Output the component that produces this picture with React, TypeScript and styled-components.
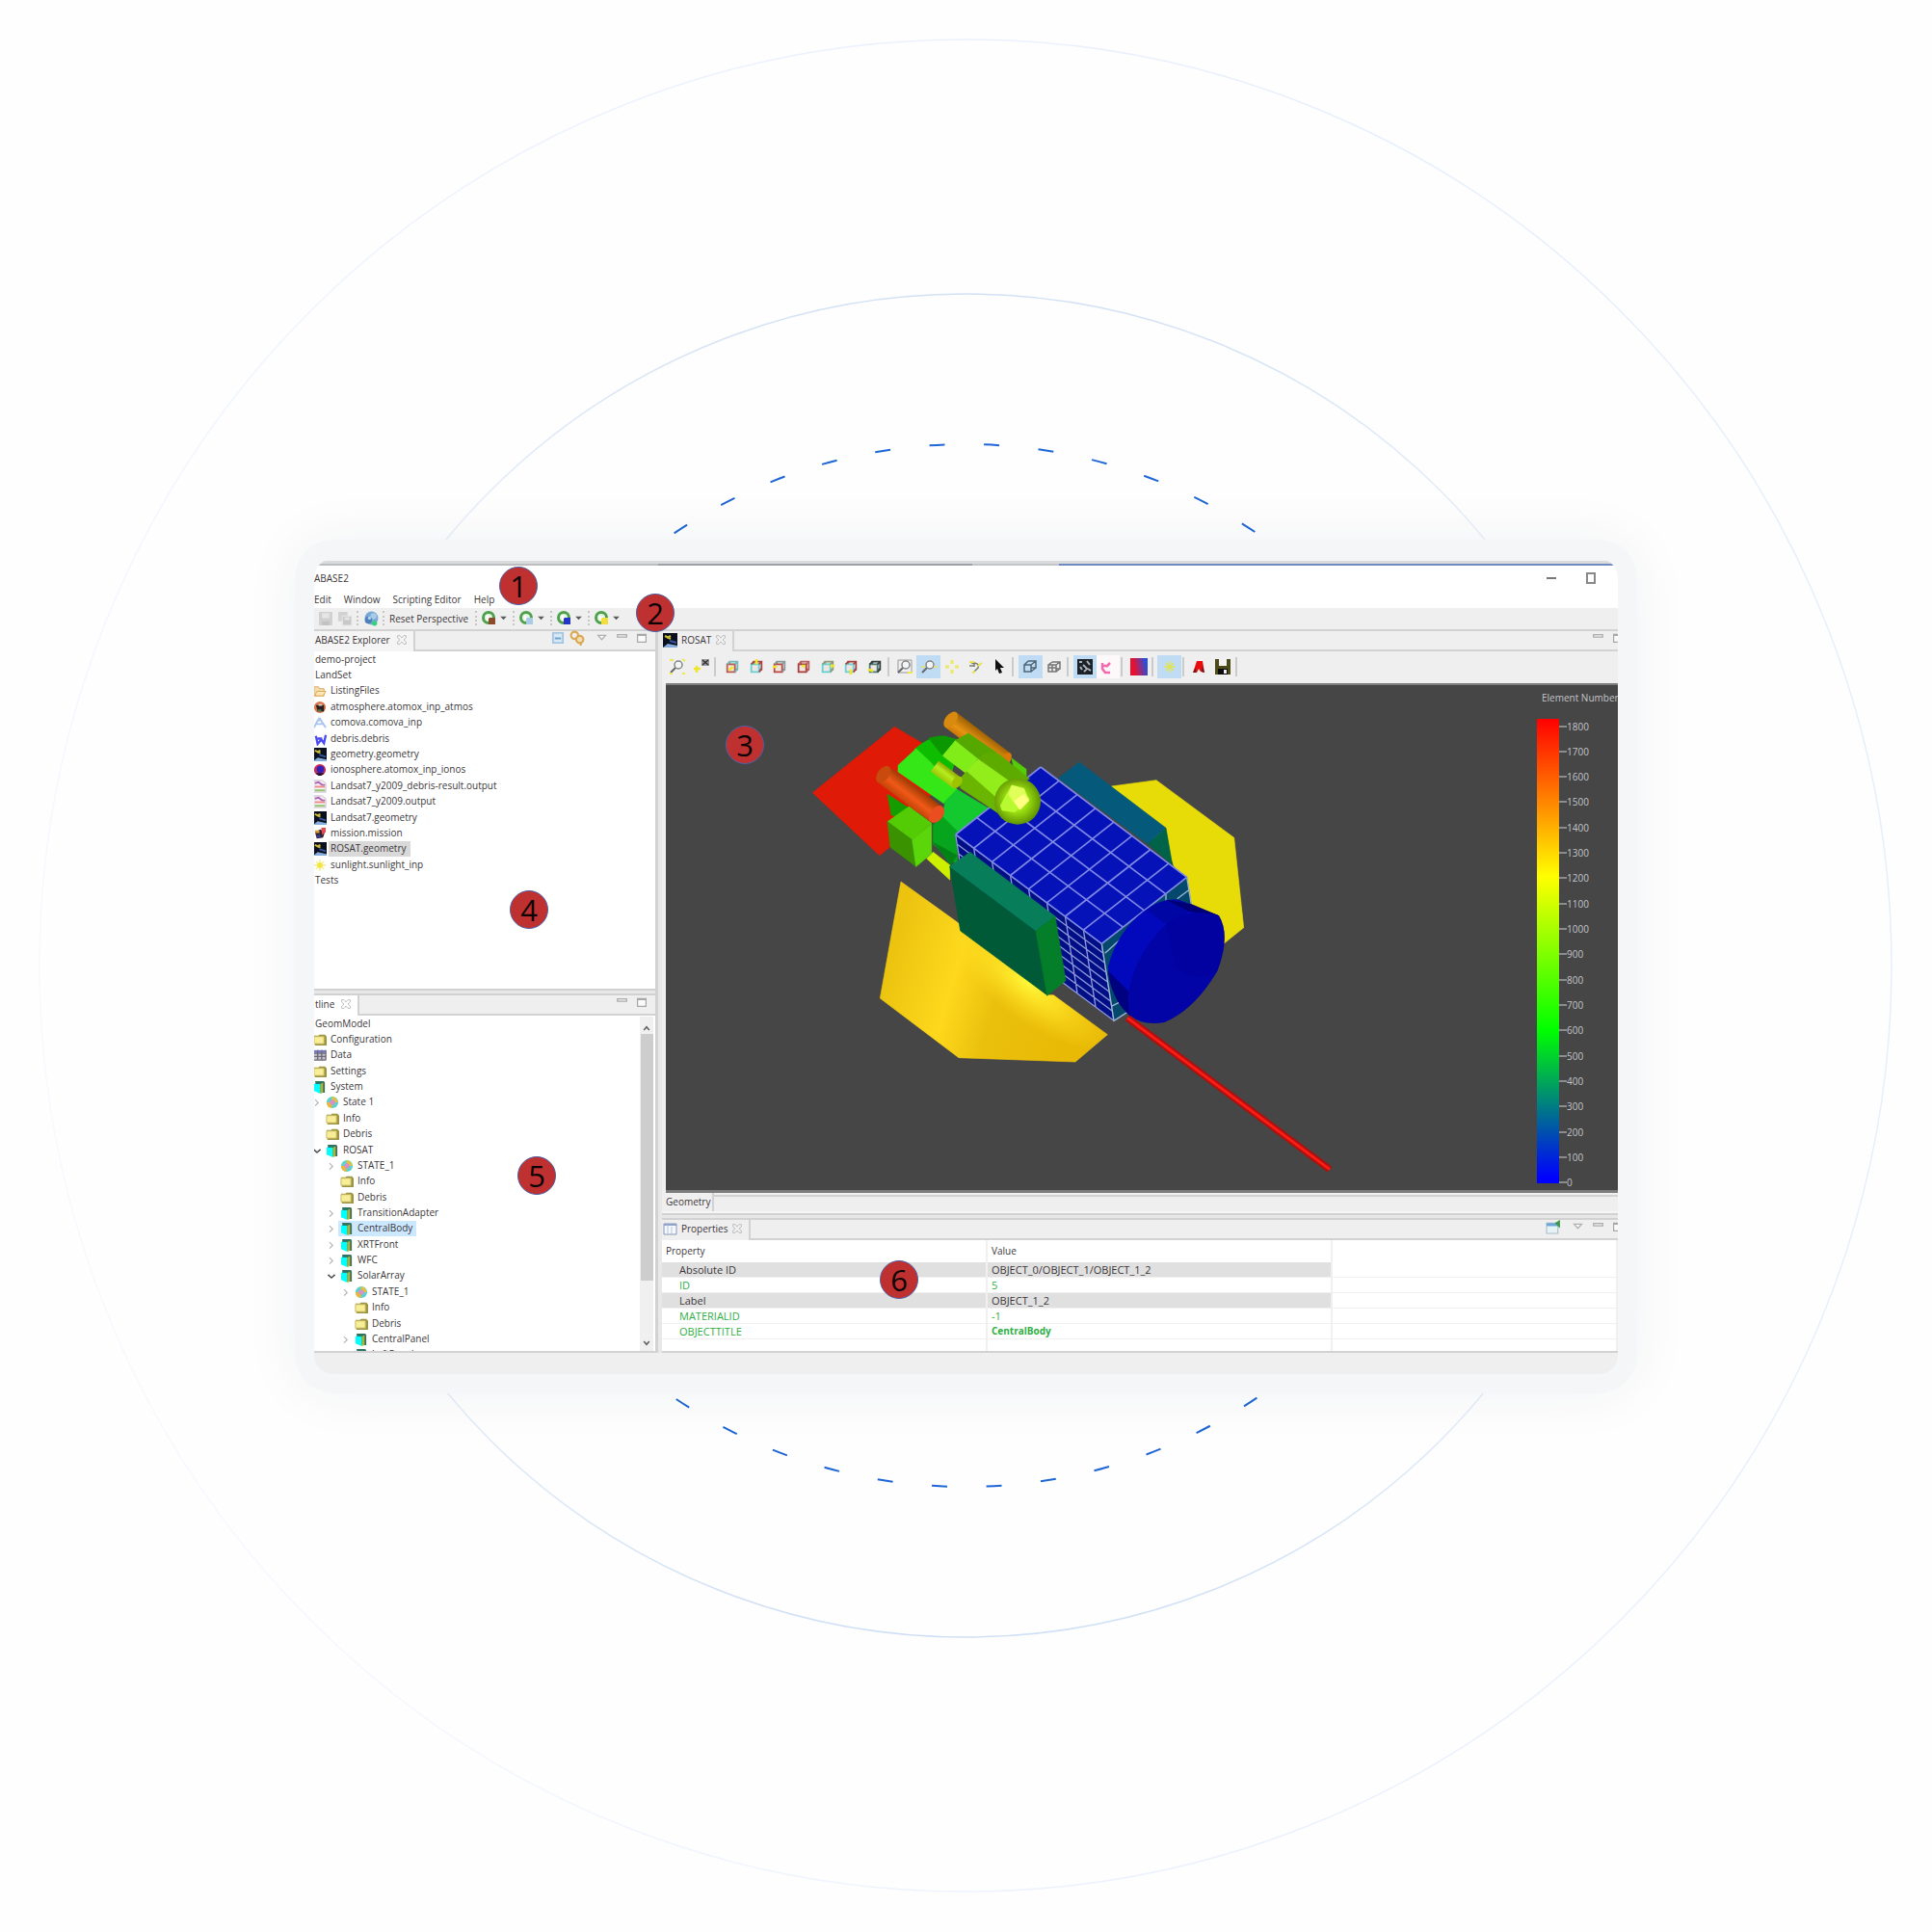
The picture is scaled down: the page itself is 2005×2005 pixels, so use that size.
import React from "react";
import styled, { createGlobalStyle, css } from "styled-components";

const Global = createGlobalStyle`
  *, *::before, *::after { box-sizing: border-box; }
  body { margin: 0; background: #fefefe; }
  button { font: inherit; color: inherit; background: none; border: 0; padding: 0; margin: 0; cursor: pointer; }
  ul { list-style: none; margin: 0; padding: 0; }
  svg { display: block; flex: none; }
`;

const LINE = "#d2d2d2";
const CHROME = "#efefef";

/* ---------- page ---------- */
const Stage = styled.main`
  position: relative;
  display: grid;
  place-items: center;
  min-height: 100vh;
  overflow: hidden;
  font: 10px/14px "Open Sans", "Noto Sans", sans-serif;
  color: #3c373a;
`;
const Rings = styled.svg`
  position: absolute;
  inset: 0;
  width: 100%;
  height: 100%;
`;
const Frame = styled.section`
  position: relative;
  width: 100%;
  max-width: 1393px;
  padding: 20px;
  border-radius: 40px;
  background: #f5f6f8;
  box-shadow: 0 0 60px rgba(30, 50, 80, 0.06);
`;
const AppWindow = styled.div`
  position: relative;
  border-radius: 20px;
  overflow: hidden;
  background: ${CHROME};
`;
const TopEdge = styled.div`
  display: flex;
  height: 7px;
  padding-top: 2px;
  background: #f5f6f8;
`;
const EdgePart = styled.span<{ $grow: number; $line: string }>`
  flex: ${(p) => p.$grow} 1 0;
  background: #dadbdd;
  border-bottom: 2px solid ${(p) => p.$line};
`;
const TitleBar = styled.header`
  display: flex;
  justify-content: space-between;
  align-items: center;
  height: 26px;
  padding-right: 22px;
  background: #fff;
`;
const WindowButtons = styled.div`
  display: flex;
  gap: 29px;
`;
const MenuBar = styled.nav`
  display: flex;
  gap: 13px;
  height: 18px;
  align-items: center;
  background: #fff;
`;
const MainToolbar = styled.div`
  display: flex;
  align-items: center;
  height: 22px;
  padding-left: 4px;
  gap: 4px;
`;
const Grip = styled.span`
  width: 3px;
  height: 15px;
  border-left: 2px dotted #c9c5c2;
`;
const ToolButton = styled.button`
  display: flex;
  align-items: center;
`;
const TextButton = styled(ToolButton)`
  padding-right: 3px;
`;
const RunButton = styled(ToolButton)`
  width: 28px;
  justify-content: space-between;
`;
const Workbench = styled.div`
  display: grid;
  grid-template-columns: 357px minmax(0, 1fr);
  column-gap: 4px;
  border-top: 2px solid ${LINE};
  background: #e8e8e8;
`;
const LeftColumn = styled.div`
  display: flex;
  flex-direction: column;
  gap: 3px;
  border-right: 3px solid ${LINE};
`;
const RightColumn = styled.div`
  display: flex;
  flex-direction: column;
  gap: 3px;
  min-width: 0;
`;
const Panel = styled.section<{ $grow?: boolean; $topLine?: boolean }>`
  display: flex;
  flex-direction: column;
  flex: ${(p) => (p.$grow ? "1 0 auto" : "0 0 auto")};
  border-top: ${(p) => (p.$topLine ? `2px solid ${LINE}` : 0)};
  border-bottom: 2px solid ${LINE};
  background: ${CHROME};
`;
const TabStrip = styled.div`
  display: flex;
  justify-content: space-between;
  height: 21px;
  border-bottom: 2px solid ${LINE};
`;
const Tab = styled.button<{ $bg?: string; $gap?: number }>`
  display: flex;
  align-items: center;
  gap: ${(p) => p.$gap ?? 6}px;
  height: 21px;
  padding: 0 6px 2px 1px;
  border-right: 2px solid ${LINE};
  background: ${(p) => p.$bg ?? CHROME};
`;
const StripTools = styled.div<{ $cut?: boolean }>`
  display: flex;
  align-items: center;
  gap: 8px;
  padding: 0 8px 4px 0;
  margin-right: ${(p) => (p.$cut ? -14 : 0)}px;
`;
const IconPair = styled.span`
  display: flex;
  align-items: center;
  gap: 5px;
  margin-right: 3px;
`;
const ExplorerBody = styled.div`
  height: 350px;
  padding-top: 1px;
  background: #fff;
`;
const OutlineBody = styled.div`
  display: flex;
  height: 348px;
  overflow: hidden;
  padding: 1px 2px 0 0;
  background: #fff;
`;
const Tree = styled.ul<{ $height: number }>`
  flex: 1;
  display: grid;
  grid-auto-rows: 1fr;
  height: ${(p) => p.$height}px;
`;
const Item = styled.li<{ $level: number }>`
  display: flex;
  align-items: center;
  margin-left: ${(p) => p.$level * 15 - 3}px;
  white-space: nowrap;
`;
const Twisty = styled.span`
  display: flex;
  justify-content: center;
  width: 12px;
  margin-left: -15px;
  margin-right: 1px;
`;
const Node = styled.button<{ $selected?: "tree" | "file" }>`
  display: flex;
  align-items: center;
  gap: 2px;
  height: 16px;
  padding: 0 4px 0 2px;
  background: ${(p) => (p.$selected === "tree" ? "#cce8ff" : "none")};
  ${(p) =>
    p.$selected === "file" &&
    css`
      & > span { background: #d9d9d9; margin-right: -4px; padding-right: 4px; }
    `}
`;
const Label = styled.span`
  height: 16px;
  line-height: 15px;
  padding-left: 2px;
`;
const ScrollBar = styled.div`
  display: flex;
  flex-direction: column;
  justify-content: space-between;
  align-items: center;
  width: 14px;
  height: 100%;
  padding: 6px 0 2px;
  background: #f0f0f0;
`;
const Thumb = styled.div`
  width: 13px;
  height: 256px;
  margin-bottom: 58px;
  background: #cdcdcd;
`;

/* ---------- editor ---------- */
const EditorTools = styled.div`
  display: flex;
  align-items: center;
  height: 33px;
  padding-left: 4px;
`;
const Group = styled.div<{ $width: number }>`
  display: flex;
  width: ${(p) => p.$width}px;
`;
const IconButton = styled.button<{ $on?: boolean; $white?: boolean }>`
  flex: 1;
  display: flex;
  align-items: center;
  justify-content: center;
  height: 24px;
  background: ${(p) => (p.$on ? "#bfdcf4" : p.$white ? "#fdf9fb" : "none")};
`;
const Separator = styled.span<{ $width?: number }>`
  width: ${(p) => p.$width ?? 8}px;
  height: 20px;
  border-left: 2px solid #cbcbcb;
  margin-left: 1px;
  margin-right: -1px;
`;
const Viewport = styled.div`
  display: grid;
  grid-template-columns: minmax(0, 1fr) 84px;
  flex: 1 0 auto;
  margin-left: 4px;
  background: #464646;
  border-top: 2px solid #7d7d7d;
  border-bottom: 3px solid #7d7d7d;
`;
const Model = styled.svg`
  width: 100%;
  height: 523px;
`;
const Legend = styled.div`
  display: flex;
  flex-direction: column;
  overflow: hidden;
  padding-top: 6px;
  color: #c3c4c8;
  white-space: nowrap;
`;
const LegendTitle = styled.span`
  padding-left: 5px;
`;
const Scale = styled.div`
  display: flex;
  flex: 1;
  padding-top: 15px;
`;
const Ramp = styled.div`
  width: 23px;
  margin-bottom: 7px;
  background: linear-gradient(#f00 0%, #ff0 34%, #0f0 67%, #00f 99%);
`;
const Ticks = styled.ul`
  display: flex;
  flex-direction: column;
  justify-content: space-between;
  margin-top: 1px;
`;
const Tick = styled.li`
  display: flex;
  align-items: center;
  height: 14px;
  &::before { content: ""; width: 8px; height: 2px; background: #8c8c8c; }
`;
const PageTabs = styled.div`
  display: flex;
  height: 21px;
  border-bottom: 2px solid #f5f5f5;
`;
const PageTab = styled.button`
  padding: 0 2px 0 4px;
  border-right: 2px solid ${LINE};
`;
const PageRest = styled.span`
  flex: 1;
  margin-top: 2px;
  border-top: 2px solid ${LINE};
`;

/* ---------- properties ---------- */
const TableWrap = styled.div`
  height: 115px;
  overflow: hidden;
  background: #fff;
`;
const Table = styled.table`
  width: 100%;
  border-collapse: collapse;
  table-layout: fixed;
  text-align: left;
`;
const Head = styled.th<{ $width?: number }>`
  width: ${(p) => (p.$width ? `${p.$width}px` : "auto")};
  height: 23px;
  padding: 0 4px;
  font-weight: 400;
  border-right: 2px solid #f0f0f0;
`;
const Row = styled.tr<{ $shade?: boolean; $green?: boolean }>`
  height: 16px;
  color: ${(p) => (p.$green ? "#2fae44" : "inherit")};
  & > td:not(:last-child) { background: ${(p) => (p.$shade ? "#e0e0e0" : "#fff")}; }
`;
const Cell = styled.td<{ $indent?: boolean; $bold?: boolean }>`
  padding: 0 4px 0 ${(p) => (p.$indent ? 18 : 4)}px;
  font-size: ${(p) => (p.$bold ? 10 : 11)}px;
  line-height: 15px;
  font-weight: ${(p) => (p.$bold ? 700 : 400)};
  border-right: 2px solid #f0f0f0;
  border-bottom: 1px solid #f0f0f0;
`;
const StatusBar = styled.footer`
  height: 22px;
`;
const Badge = styled.span<{ $x: number; $y: number }>`
  position: absolute;
  left: ${(p) => p.$x}px;
  top: ${(p) => p.$y}px;
  display: grid;
  place-items: center;
  width: 40px;
  height: 40px;
  border: 1px solid #4c62a4;
  border-radius: 50%;
  background: #bf3030;
  color: #0c0404;
  font-size: 31px;
  line-height: 38px;
`;

/* ---------- icons ---------- */
type IconName =
  | "folder" | "open" | "atmos" | "comova" | "debris" | "geom" | "iono" | "output" | "mission" | "sun"
  | "data" | "part" | "state" | "close" | "min" | "max" | "menu" | "down" | "collapse" | "link" | "table" | "pin"
  | "save" | "saveall" | "globe" | "right" | "open-v" | "up-v" | "down-v";

const art: Record<IconName, React.ReactNode> = {
  folder: <><path d="M1 3h5l1-1h6l2 2v10H2z" fill="#9b9443" /><path d="M1 4h11v8H1z" fill="#f8ee98" stroke="#c3b65c" /></>,
  open: <><path d="M1 3h5l1 2h5v8H1z" fill="#f4deb0" stroke="#d7a65a" /><path d="M4 8h10l-3 5H2z" fill="#fbe6b4" stroke="#d9a552" /></>,
  atmos: <><circle cx="7.500" cy="7.500" r="6.500" fill="#d9784c" /><path d="M3 5h9v7H5z" fill="#2b211f" /><path d="M6 4h4v2H6z" fill="#e6d6cc" /><path d="M5 10h4v2H5z" fill="#4b7a54" /></>,
  comova: <><path d="M7 2l-3 5-3 6M7 2l3 5 4 6M3 9h9M4 5h6" stroke="#a9c4f0" strokeWidth="2" fill="none" /></>,
  debris: <path d="M3 4l2 9 4-5 3 4 2-9M5 7h5" fill="none" stroke="#4a4af2" strokeWidth="2.500" />,
  geom: <><path d="M0 0h15v15H0z" fill="#0b1020" /><path d="M2 3l6 3M4 5l4-2" stroke="#c9bb35" strokeWidth="2" /><path d="M7 8l7 2" stroke="#35589c" strokeWidth="2" /><path d="M0 15l5-4 10 2v2z" fill="#86aedc" /></>,
  iono: <><circle cx="7.500" cy="7.500" r="6.500" fill="#c22c58" /><circle cx="8" cy="7" r="4" fill="#3322b8" /><path d="M3 11h9l-3 3H6z" fill="#1c1030" /></>,
  output: <><path d="M1 1h9l4 3v10H1z" fill="#f5f2f5" stroke="#c9b7cf" /><path d="M2 4l4-1 4 3h3" stroke="#b064b8" fill="none" strokeWidth="2" /><path d="M2 8h11" stroke="#f08a8a" strokeWidth="2" /><path d="M2 12h11" stroke="#8fc66c" strokeWidth="2" /></>,
  mission: <><path d="M2 6l6-3 5 3-2 6-7 1z" fill="#35202c" /><path d="M9 1h5v5l-4 3z" fill="#e24a55" /><path d="M2 4h5v3H2z" fill="#cf9b3d" /><path d="M4 9h4v3H4z" fill="#2c3c9a" /></>,
  sun: <><path d="M7.500 1v13M1 7.500h13M3 3l9 9M12 3l-9 9" stroke="#f7f0a8" strokeWidth="2" /><circle cx="7.500" cy="7.500" r="3" fill="#f5e53a" /></>,
  data: <><path d="M1 2h13v11H1z" fill="#c6c4cf" /><path d="M1 2h13v3H1z" fill="#7a78cf" /><path d="M1 5.500h13M1 9h13M1 13h13M5 2v11M9.500 2v11M14 2v11" stroke="#6d6b78" strokeWidth="1.500" /></>,
  part: <><path d="M2 1h10l1 2v11H8z" fill="#3f6e5c" /><path d="M1 4h7v11l-7-3z" fill="#0ff" /><path d="M8 3h3v11l-3 1z" fill="#a8b73c" /><path d="M3 2h8l-2 2H2z" fill="#247868" /></>,
  state: <><circle cx="7.500" cy="7.500" r="6.500" fill="#58d4cc" /><path d="M7 1a6.500 6.500 0 0 1 6.500 6.500H7z" fill="#e2c23e" /><path d="M7 14a6 6 0 0 1-6-6.500h6z" fill="#e8b93c" /><circle cx="7.500" cy="7.500" r="3" fill="#d893c4" /></>,
  close: <path d="M2 2h3l2.500 3L10 2h3v3l-3 2.500L13 10v3h-3L7.500 10 5 13H2v-3l3-2.500L2 5z" fill="none" stroke="#b4b4b4" />,
  min: <path d="M2 3h11v3H2z" fill="#f0f0f0" stroke="#adadad" strokeWidth="1.500" />,
  max: <><path d="M2 3h11v10H2z" fill="#fafafa" stroke="#a8a8a8" strokeWidth="1.500" /><path d="M2 4h11" stroke="#a8a8a8" strokeWidth="2" /></>,
  menu: <path d="M3 4h9L7.500 9z" fill="#fafafa" stroke="#b0b0b0" strokeWidth="1.500" />,
  down: <path d="M3 5h9l-4.500 5z" fill="#5a5a5a" />,
  collapse: <><path d="M2 2h11v11H2z" fill="#d8e9f6" stroke="#a5c6e2" strokeWidth="2" /><path d="M4 8h7" stroke="#6fa4d0" strokeWidth="2" /></>,
  link: <><circle cx="5" cy="5" r="3.500" fill="none" stroke="#dba852" strokeWidth="2" /><circle cx="10" cy="9" r="3.500" fill="#f2dfb6" stroke="#dba852" strokeWidth="2" /><path d="M11 12v3" stroke="#dba852" strokeWidth="2" /></>,
  table: <><path d="M1 2h13v11H1z" fill="#f5f8fc" stroke="#8797b9" /><path d="M1 3h13" stroke="#8fa3cb" strokeWidth="2" /><path d="M5 3v10M9 5v8" stroke="#b9c4da" /></>,
  pin: <><path d="M1 4h11v10H1z" fill="#e6f3f5" stroke="#a9bccb" /><path d="M1 4h11v3H1z" fill="#6fa8d8" /><path d="M9 4l5-3v8l-3-3z" fill="#3a9a4a" /></>,
  save: <><path d="M1 1h13v13H1z" fill="#d0d0d0" /><path d="M4 2h7v5H4z" fill="#e6e6e6" /><path d="M4 10h7v4H4z" fill="#c2c2c2" /></>,
  saveall: <><path d="M1 1h9v9H1z" fill="#d2d2d2" /><path d="M5 5h9v9H5z" fill="#c8c8c8" stroke="#e8e8e8" /><path d="M7 6h5v3H7z" fill="#e4e4e4" /></>,
  globe: <><circle cx="8" cy="7" r="6.500" fill="#78a8d6" /><circle cx="10" cy="5" r="3" fill="#a8cbe9" /><circle cx="5" cy="9" r="3.500" fill="#4c82bc" /><circle cx="6" cy="7" r="1.500" fill="#bcd8ee" /><circle cx="11" cy="12" r="2.500" fill="#35d07a" /></>,
  right: <path d="M5 4l4 4-4 4" fill="none" stroke="#b4b4b4" strokeWidth="1.500" />,
  "open-v": <path d="M3 6l4.500 4L12 6" fill="none" stroke="#505050" strokeWidth="2" />,
  "up-v": <path d="M4 10l3.500-4L11 10" fill="none" stroke="#606060" strokeWidth="2" />,
  "down-v": <path d="M4 5l3.500 4L11 5" fill="none" stroke="#606060" strokeWidth="2" />,
};
const Icon = ({ name, size = 14 }: { name: IconName; size?: number }) => (
  <svg width={size} height={size} viewBox="0 0 15 15" aria-hidden="true">{art[name]}</svg>
);
const RunIcon = ({ color }: { color: string }) => (
  <svg width="15" height="15" viewBox="0 0 15 15" aria-hidden="true">
    <circle cx="7" cy="7" r="5.500" fill="#e8f4e4" stroke="#4fa14d" strokeWidth="3" />
    <path d="M7 7h7v7H7z" fill={color} />
    <path d="M5 4l3 3-3 3z" fill="#fff" />
  </svg>
);

type Faces = { front: string; side: string; mark: string };
const CubeIcon = ({ front, side, mark }: Faces) => (
  <svg width="16" height="18" viewBox="0 0 18 18" aria-hidden="true">
    <path d="M6 3h9v9h-9z" fill="#e4eeee" stroke={side} strokeWidth="2" />
    <path d="M3 6h9v9H3z" fill="#efe6e4" stroke={front} strokeWidth="2" />
    <path d="M3 6l3-3M12 6l3-3M12 15l3-3" stroke={side} strokeWidth="2" />
    <path d={mark} stroke="#f0e72c" strokeWidth="3" />
  </svg>
);
const cubes: Faces[] = [
  { front: "#b8584e", side: "#73b9b8", mark: "M5 13l5-4" },
  { front: "#66cfd0", side: "#a94340", mark: "M9 0v6" },
  { front: "#b84a40", side: "#8a9a9c", mark: "M1 9h5" },
  { front: "#a83c38", side: "#b9625c", mark: "M7 8h4" },
  { front: "#60d2d2", side: "#929a78", mark: "M12 8h5" },
  { front: "#70cfd2", side: "#a8403c", mark: "M9 12v6" },
  { front: "#4b7a72", side: "#343c3c", mark: "M1 12l6 2" },
];
const ToolSvg = ({ children }: { children: React.ReactNode }) => (
  <svg width="18" height="18" viewBox="0 0 18 18" aria-hidden="true">{children}</svg>
);
const lens = (
  <><circle cx="10" cy="7" r="4" fill="#f4f6f6" stroke="#80858a" strokeWidth="1.500" /><path d="M7 10l-5 5" stroke="#666" strokeWidth="2" /></>
);

/* ---------- satellite ---------- */
const lerp = (a: number[], b: number[], t: number) => [a[0] + (b[0] - a[0]) * t, a[1] + (b[1] - a[1]) * t];
const mesh = (a: number[], b: number[], c: number[], d: number[], n: number, m: number) => {
  const parts: string[] = [];
  for (let i = 0; i <= n; i++) parts.push(`M${lerp(a, b, i / n)}L${lerp(d, c, i / n)}`);
  for (let j = 0; j <= m; j++) parts.push(`M${lerp(a, d, j / m)}L${lerp(b, c, j / m)}`);
  return parts.join("");
};
const Face = ({ p, c }: { p: string; c: string }) => <polygon points={p} fill={c} stroke={c} strokeWidth="2" />;

const Satellite = () => (
  <Model viewBox="-387 0 2712 1569" role="img" aria-label="ROSAT geometry">
    <defs>
      <radialGradient id="glow" gradientUnits="userSpaceOnUse" cx="0" cy="0" r="1" gradientTransform="translate(740 930) rotate(37) scale(300 110)">
        <stop offset="0" stopColor="#fff638" /><stop offset=".35" stopColor="#ffe628" stopOpacity=".8" /><stop offset="1" stopColor="#ffd91c" stopOpacity="0" />
      </radialGradient>
      <linearGradient id="dish" gradientUnits="userSpaceOnUse" x1="300" y1="900" x2="860" y2="1060">
        <stop offset="0" stopColor="#ecc410" /><stop offset=".35" stopColor="#fdd81c" /><stop offset=".6" stopColor="#eac00c" /><stop offset="1" stopColor="#e8ba06" />
      </linearGradient>
      <linearGradient id="tubeA" gradientUnits="userSpaceOnUse" x1="595" y1="145" x2="562" y2="190">
        <stop offset="0" stopColor="#a36404" /><stop offset=".6" stopColor="#e89412" /><stop offset="1" stopColor="#c87808" />
      </linearGradient>
      <linearGradient id="tubeB" gradientUnits="userSpaceOnUse" x1="388" y1="315" x2="352" y2="362">
        <stop offset="0" stopColor="#a33c04" /><stop offset=".55" stopColor="#f05a18" /><stop offset="1" stopColor="#c44408" />
      </linearGradient>
      <linearGradient id="tubeC" gradientUnits="userSpaceOnUse" x1="498" y1="258" x2="472" y2="292">
        <stop offset="0" stopColor="#8c9a00" /><stop offset=".5" stopColor="#b4ee1c" /><stop offset="1" stopColor="#a0c80a" />
      </linearGradient>
      <radialGradient id="dome" gradientUnits="userSpaceOnUse" cx="705" cy="360" r="78">
        <stop offset="0" stopColor="#d4ff40" /><stop offset=".45" stopColor="#9be012" /><stop offset="1" stopColor="#5a8c00" />
      </radialGradient>
    </defs>
    <Face p="325,130 410,180 470,300 310,505 278,530 70,335" c="#df1a06" />
    <Face p="1000,315 1140,296 1382,475 1412,755 1350,805 1240,690 1190,550" c="#e8dc08" />
    <Face p="345,612 520,738 800,965 820,965 988,1088 888,1173 525,1160 280,975" c="url(#dish)" />
    <polygon points="345,612 520,738 800,965 820,965 988,1088 888,1173 525,1160 280,975" fill="url(#glow)" />
    <Face p="835,290 900,240 1170,445 1115,495" c="#055a7c" />
    <Face p="1115,495 1170,445 1190,560" c="#006248" />
    <Face p="303,340 350,370 440,430 315,405" c="#159d00" />
    <path d="M385 200Q430 160 480 158L530 172L500 290Z" fill="#0fbd00" />
    <path d="M430 165Q460 155 480 158L525 172L478 225Z" fill="#0b9700" />
    <Face p="336,250 392,198 435,238 520,325 478,368 336,270" c="#35e717" />
    <Face p="425,540 445,520 497,560 497,606" c="#cdf000" />
    <Face p="520,325 620,385 515,465 475,415 482,362" c="#13c92f" />
    <Face p="475,410 520,455 520,560 445,495 445,435" c="#06a51d" />
    <Face p="445,490 520,530 500,560" c="#038316" />
    <Face p="303,425 370,378 440,430 380,482" c="#54cc05" />
    <Face p="303,425 380,482 392,565 312,505" c="#3a9200" />
    <Face p="380,482 440,432 440,525 392,565" c="#5ad60a" />
    <Face p="515,465 970,805 1008,1045 553,705" c="#000f86" />
    <path d={mesh([515, 465], [970, 805], [1008, 1045], [553, 705], 8, 8)} stroke="#8f97d8" strokeWidth="4" fill="none" />
    <Face p="970,805 1235,598 1250,690 1050,1018 1008,1045" c="#04496c" />
    <path d="M970 805L1235 598L1250 690M970 805L1008 1045L1050 1018M1170 650V680M1205 665L1245 635M980 835L1030 790M1000 1000L1030 985" stroke="#9fb4d8" strokeWidth="4" fill="none" />
    <Face p="515,465 780,255 1235,598 970,805" c="#0512b8" />
    <path d={mesh([515, 465], [970, 805], [1235, 598], [780, 255], 8, 4)} stroke="#7f88e4" strokeWidth="5" fill="none" />
    <path d="M990 875Q1020 765 1100 705Q1150 665 1200 668L1335 718L1060 1032Q990 960 990 875Z" fill="#0208bb" />
    <path d="M1110 700Q1160 664 1210 668L1335 718L1245 705L1172 745Z" fill="#0006a4" />
    <path d="M1170 668L1250 682L1335 718L1245 706Z" fill="#000074" />
    <path d="M990 890L1055 955L1060 1032Q1000 980 990 890Z" fill="#00017e" />
    <path d="M1055 950Q1080 830 1172 745Q1240 690 1335 718Q1372 780 1330 890Q1260 1010 1165 1050Q1100 1062 1060 1030Q1045 990 1055 950Z" fill="#0204a6" />
    <path d="M1172 745Q1240 690 1335 718Q1372 780 1330 890Q1260 930 1200 880Z" fill="#01029c" opacity=".6" />
    <Face p="497,565 765,765 800,965 530,765" c="#005a37" />
    <Face p="497,565 560,520 825,720 765,765" c="#087d5a" />
    <Face p="765,765 825,720 858,920 800,967" c="#047e28" />
    <path d="M500 108L672 238" stroke="url(#tubeA)" strokeWidth="58" />
    <ellipse cx="500" cy="108" rx="17" ry="29" fill="#d88a0e" transform="rotate(37 500 108)" />
    <ellipse cx="672" cy="230" rx="15" ry="22" fill="#d87a08" transform="rotate(37 672 230)" />
    <Face p="690,228 735,262 735,290 700,275" c="#55cc08" />
    <Face p="475,220 515,172 585,228 548,275" c="#80ed18" />
    <Face p="515,172 555,150 645,212 585,228" c="#55a800" />
    <Face p="585,228 612,210 650,215 745,292 690,315" c="#5eab00" />
    <Face p="530,290 550,268 670,360 665,410 530,320" c="#69b500" />
    <Face p="550,268 585,230 700,312 660,365" c="#93ed1a" />
    <path d="M450 252L522 306" stroke="url(#tubeC)" strokeWidth="42" />
    <ellipse cx="520" cy="302" rx="14" ry="20" fill="#9cc400" transform="rotate(37 520 302)" />
    <circle cx="708" cy="362" r="72" fill="url(#dome)" />
    <Face p="655,375 690,312 715,320 745,355 700,395 660,390" c="#b8fa30" />
    <Face p="690,312 728,322 742,358 715,388 695,362 680,340" c="#e0ff58" />
    <Face p="697,362 728,340 743,360 716,387" c="#ffff84" />
    <path d="M290 278L455 402" stroke="url(#tubeB)" strokeWidth="60" />
    <ellipse cx="290" cy="278" rx="18" ry="30" fill="#c84a0c" transform="rotate(37 290 278)" />
    <ellipse cx="456" cy="402" rx="20" ry="30" fill="#ea4e20" transform="rotate(37 456 402)" />
    <path d="M1050 1036L1680 1508" stroke="#b00f0c" strokeWidth="22" />
    <path d="M1050 1036L1680 1508" stroke="#fa1c16" strokeWidth="9" />
  </Model>
);

/* ---------- data ---------- */
type Entry = { text: string; icon?: IconName; level: number; twisty?: IconName; selected?: "tree" | "file" };
const files: Entry[] = [
  { text: "demo-project", level: 0 },
  { text: "LandSet", level: 0 },
  { text: "ListingFiles", level: 0, icon: "open" },
  { text: "atmosphere.atomox_inp_atmos", level: 0, icon: "atmos" },
  { text: "comova.comova_inp", level: 0, icon: "comova" },
  { text: "debris.debris", level: 0, icon: "debris" },
  { text: "geometry.geometry", level: 0, icon: "geom" },
  { text: "ionosphere.atomox_inp_ionos", level: 0, icon: "iono" },
  { text: "Landsat7_y2009_debris-result.output", level: 0, icon: "output" },
  { text: "Landsat7_y2009.output", level: 0, icon: "output" },
  { text: "Landsat7.geometry", level: 0, icon: "geom" },
  { text: "mission.mission", level: 0, icon: "mission" },
  { text: "ROSAT.geometry", level: 0, icon: "geom", selected: "file" },
  { text: "sunlight.sunlight_inp", level: 0, icon: "sun" },
  { text: "Tests", level: 0 },
];
const outline: Entry[] = [
  { text: "GeomModel", level: 0 },
  { text: "Configuration", level: 0, icon: "folder" },
  { text: "Data", level: 0, icon: "data" },
  { text: "Settings", level: 0, icon: "folder" },
  { text: "System", level: 0, icon: "part" },
  { text: "State 1", level: 1, icon: "state", twisty: "right" },
  { text: "Info", level: 1, icon: "folder" },
  { text: "Debris", level: 1, icon: "folder" },
  { text: "ROSAT", level: 1, icon: "part", twisty: "open-v" },
  { text: "STATE_1", level: 2, icon: "state", twisty: "right" },
  { text: "Info", level: 2, icon: "folder" },
  { text: "Debris", level: 2, icon: "folder" },
  { text: "TransitionAdapter", level: 2, icon: "part", twisty: "right" },
  { text: "CentralBody", level: 2, icon: "part", twisty: "right", selected: "tree" },
  { text: "XRTFront", level: 2, icon: "part", twisty: "right" },
  { text: "WFC", level: 2, icon: "part", twisty: "right" },
  { text: "SolarArray", level: 2, icon: "part", twisty: "open-v" },
  { text: "STATE_1", level: 3, icon: "state", twisty: "right" },
  { text: "Info", level: 3, icon: "folder" },
  { text: "Debris", level: 3, icon: "folder" },
  { text: "CentralPanel", level: 3, icon: "part", twisty: "right" },
  { text: "LeftPanel", level: 3, icon: "part" },
];
const properties = [
  { name: "Absolute ID", value: "OBJECT_0/OBJECT_1/OBJECT_1_2", shade: true },
  { name: "ID", value: "5" },
  { name: "Label", value: "OBJECT_1_2", shade: true },
  { name: "MATERIALID", value: "-1" },
  { name: "OBJECTTITLE", value: "CentralBody", bold: true },
];
const badges = [
  [192, 8], [334, 36], [427, 173], [203, 344], [211, 620], [587, 728],
];

const TreeView = ({ entries, height }: { entries: Entry[]; height: number }) => (
  <Tree $height={height}>
    {entries.map((e, i) => (
      <Item key={i} $level={e.level}>
        {e.level > 0 && <Twisty>{e.twisty && <Icon name={e.twisty} size={12} />}</Twisty>}
        <Node $selected={e.selected}>
          {e.icon && <Icon name={e.icon} />}
          <Label>{e.text}</Label>
        </Node>
      </Item>
    ))}
  </Tree>
);

export default function App() {
  return (
    <Stage>
      <Global />
      <Rings viewBox="0 0 2005 2005" aria-hidden="true">
        <defs>
          <linearGradient id="outer" x1="0" y1=".6" x2="1" y2=".3">
            <stop offset="0" stopColor="#f6f9fe" /><stop offset=".3" stopColor="#eef3fd" /><stop offset="1" stopColor="#e6eefc" />
          </linearGradient>
          <linearGradient id="middle" x1="0" y1="0" x2="0" y2="1">
            <stop offset="0" stopColor="#d3e1f5" /><stop offset=".2" stopColor="#ecf1fa" /><stop offset=".35" stopColor="#f4f7fc" stopOpacity="0" />
            <stop offset=".65" stopColor="#f4f7fc" stopOpacity="0" /><stop offset=".8" stopColor="#e6eefa" /><stop offset="1" stopColor="#cfdff5" />
          </linearGradient>
        </defs>
        <circle cx="1002" cy="1002" r="961" fill="none" stroke="url(#outer)" strokeWidth="1.500" />
        <circle cx="1002" cy="1002" r="697" fill="none" stroke="url(#middle)" strokeWidth="1.500" />
        <circle cx="1002" cy="1002" r="541" fill="none" stroke="#1f66d6" strokeWidth="2" strokeDasharray="16 40.650" strokeDashoffset="-19" />
      </Rings>
      <Frame>
        <AppWindow>
          <TopEdge>
            <EdgePart $grow={357} $line="#bcbdbf" />
            <EdgePart $grow={325} $line="#9da0a6" />
            <EdgePart $grow={90} $line="#c4c5c8" />
            <EdgePart $grow={580} $line="#6f8abf" />
          </TopEdge>
          <TitleBar>
            <span>ABASE2</span>
            <WindowButtons>
              <ToolButton aria-label="Minimize">
                <svg width="12" height="12"><path d="M1 6h10" stroke="#777" strokeWidth="2" /></svg>
              </ToolButton>
              <ToolButton aria-label="Maximize">
                <svg width="12" height="12"><path d="M2 1h8v10H2z" fill="none" stroke="#888" strokeWidth="2" /></svg>
              </ToolButton>
            </WindowButtons>
          </TitleBar>
          <MenuBar>
            {["Edit", "Window", "Scripting Editor", "Help"].map((m) => <button key={m}>{m}</button>)}
          </MenuBar>
          <MainToolbar>
            <ToolButton aria-label="Save"><Icon name="save" size={16} /></ToolButton>
            <ToolButton aria-label="Save all"><Icon name="saveall" size={16} /></ToolButton>
            <Grip />
            <ToolButton aria-label="Perspective"><Icon name="globe" size={16} /></ToolButton>
            <Grip />
            <TextButton>Reset Perspective</TextButton>
            {["#8a4a2c", "#a9cbe6", "#2436c8", "#f2df3c"].map((c) => (
              <React.Fragment key={c}>
                <Grip />
                <RunButton aria-label="Run analysis"><RunIcon color={c} /><Icon name="down" size={11} /></RunButton>
              </React.Fragment>
            ))}
          </MainToolbar>
          <Workbench>
            <LeftColumn>
              <Panel>
                <TabStrip>
                  <Tab $bg="#f5f5f5">ABASE2 Explorer<Icon name="close" size={12} /></Tab>
                  <StripTools>
                    <IconPair><Icon name="collapse" /><Icon name="link" size={16} /></IconPair>
                    <Icon name="menu" size={13} /><Icon name="min" size={13} /><Icon name="max" size={12} />
                  </StripTools>
                </TabStrip>
                <ExplorerBody><TreeView entries={files} height={246} /></ExplorerBody>
              </Panel>
              <Panel $topLine>
                <TabStrip>
                  <Tab $bg="#fff">tline<Icon name="close" size={12} /></Tab>
                  <StripTools><Icon name="min" size={13} /><Icon name="max" size={12} /></StripTools>
                </TabStrip>
                <OutlineBody>
                  <TreeView entries={outline} height={360} />
                  <ScrollBar><Icon name="up-v" size={12} /><Thumb /><Icon name="down-v" size={12} /></ScrollBar>
                </OutlineBody>
              </Panel>
            </LeftColumn>
            <RightColumn>
              <Panel $grow>
                <TabStrip>
                  <Tab $gap={4}><Icon name="geom" size={15} />ROSAT<Icon name="close" size={12} /></Tab>
                  <StripTools $cut><Icon name="min" size={13} /><Icon name="max" size={12} /></StripTools>
                </TabStrip>
                <EditorTools>
                  <Group $width={49}>
                    <IconButton aria-label="Zoom fit"><ToolSvg>{lens}<path d="M1 2h4M14 1l3 2M14 16h3M1 16h3" stroke="#eee84a" strokeWidth="2" /></ToolSvg></IconButton>
                    <IconButton aria-label="Pick"><ToolSvg><path d="M9 1h8v7H9z" fill="#9a9a9a" /><path d="M10 2l6 5M16 2l-6 5" stroke="#333" strokeWidth="1.500" /><path d="M1 11h7M4 8v7" stroke="#eee52e" strokeWidth="2.500" /></ToolSvg></IconButton>
                  </Group>
                  <Separator />
                  <Group $width={172}>
                    {cubes.map((c, i) => <IconButton key={i} aria-label={`View ${i + 1}`}><CubeIcon {...c} /></IconButton>)}
                  </Group>
                  <Separator $width={7} />
                  <Group $width={122}>
                    <IconButton aria-label="Zoom window"><ToolSvg><path d="M2 2h14v13H2z" fill="none" stroke="#999" />{lens}<path d="M12 15h5" stroke="#eee84a" strokeWidth="2" /></ToolSvg></IconButton>
                    <IconButton $on aria-label="Zoom"><ToolSvg>{lens}<path d="M1 9h4M14 9h4" stroke="#dfe07a" strokeWidth="2" /></ToolSvg></IconButton>
                    <IconButton aria-label="Pan"><ToolSvg><path d="M9 2v4M9 12v4M2 9h4M12 9h4" stroke="#f0e860" strokeWidth="3" /></ToolSvg></IconButton>
                    <IconButton aria-label="Rotate"><ToolSvg><path d="M4 4l4 2v3M8 5q6 1 4 5l-4 4M3 8h5" fill="none" stroke="#7c8070" strokeWidth="1.500" /><path d="M3 4h5M12 8l4-3M6 15l3-1" stroke="#ece24a" strokeWidth="2" /></ToolSvg></IconButton>
                    <IconButton aria-label="Select"><ToolSvg><path d="M5 1l9 9H10l2 5-3 1-2-5-2 2z" fill="#111" /></ToolSvg></IconButton>
                  </Group>
                  <Separator />
                  <Group $width={49}>
                    <IconButton $on aria-label="Perspective view"><ToolSvg><path d="M3 7h7v7H3zM7 3h8v7h-5M3 7l4-4M10 7l5-4M10 14l5-4" fill="none" stroke="#4f6576" strokeWidth="1.500" /></ToolSvg></IconButton>
                    <IconButton aria-label="Parallel view"><ToolSvg><path d="M3 7h8v7H3zM7 4h8v7h-4M3 7l4-3M11 7l4-3M11 14l4-3M3 10h8M7 7v7" fill="none" stroke="#777" strokeWidth="1.500" /></ToolSvg></IconButton>
                  </Group>
                  <Separator />
                  <Group $width={48}>
                    <IconButton $on aria-label="Mesh"><ToolSvg><path d="M1 1h16v16H1z" fill="#1c2228" /><path d="M3 4h3M11 3l3 4M7 7l4 4-3 3M4 9l2 3M12 11l3 2" stroke="#aab4bc" strokeWidth="2" /></ToolSvg></IconButton>
                    <IconButton $white aria-label="Normals"><ToolSvg><path d="M11 5L7 9M3 5v6l3 4h5M4 8h4" fill="none" stroke="#f46ab0" strokeWidth="2.500" /></ToolSvg></IconButton>
                  </Group>
                  <Separator />
                  <Group $width={24}>
                    <IconButton aria-label="Colours">
                      <ToolSvg><defs><linearGradient id="rb" x1="0" y1=".6" x2="1" y2=".4"><stop offset=".2" stopColor="#e8102c" /><stop offset="1" stopColor="#1c52e8" /></linearGradient></defs><path d="M0 0h18v18H0z" fill="url(#rb)" /></ToolSvg>
                    </IconButton>
                  </Group>
                  <Separator $width={7} />
                  <Group $width={25}>
                    <IconButton $on aria-label="Light"><ToolSvg><path d="M9 3v12M3 9h12M5 5l8 8M13 5l-8 8" stroke="#dfe35a" strokeWidth="1.500" /></ToolSvg></IconButton>
                  </Group>
                  <Separator $width={6} />
                  <Group $width={49}>
                    <IconButton aria-label="Shade"><ToolSvg><path d="M3 15l4-12h6l2 12-4-1-2-3-2 4z" fill="#e80c0c" /><path d="M3 15l3-5v5zM13 8l2 7-3-1z" fill="#5a2020" /></ToolSvg></IconButton>
                    <IconButton aria-label="Save picture"><ToolSvg><path d="M1 1h16v16H1z" fill="#4c4a16" /><path d="M5 1h8v7H5z" fill="#f2f2f2" /><path d="M4 11h10v6H4z" fill="#0c0c0c" /><path d="M10 12h3v4h-3z" fill="#eee" /></ToolSvg></IconButton>
                  </Group>
                  <Separator />
                </EditorTools>
                <Viewport>
                  <Satellite />
                  <Legend>
                    <LegendTitle>Element Number</LegendTitle>
                    <Scale>
                      <Ramp />
                      <Ticks>{Array.from({ length: 19 }, (_, i) => <Tick key={i}>{1800 - i * 100}</Tick>)}</Ticks>
                    </Scale>
                  </Legend>
                </Viewport>
                <PageTabs><PageTab>Geometry</PageTab><PageRest /></PageTabs>
              </Panel>
              <Panel $topLine>
                <TabStrip>
                  <Tab $gap={4}><Icon name="table" size={15} />Properties<Icon name="close" size={12} /></Tab>
                  <StripTools $cut><IconPair><Icon name="pin" size={16} /></IconPair><Icon name="menu" size={13} /><Icon name="min" size={13} /><Icon name="max" size={12} /></StripTools>
                </TabStrip>
                <TableWrap>
                  <Table>
                    <thead><tr><Head $width={337}>Property</Head><Head $width={358}>Value</Head><Head aria-label="Empty" /></tr></thead>
                    <tbody>
                      {properties.map((p) => (
                        <Row key={p.name} $shade={p.shade} $green={!p.shade}>
                          <Cell $indent>{p.name}</Cell>
                          <Cell $bold={p.bold}>{p.value}</Cell>
                          <Cell />
                        </Row>
                      ))}
                      <Row><Cell /><Cell /><Cell /></Row>
                    </tbody>
                  </Table>
                </TableWrap>
              </Panel>
            </RightColumn>
          </Workbench>
          <StatusBar />
          {badges.map(([x, y], i) => <Badge key={i} $x={x} $y={y}>{i + 1}</Badge>)}
        </AppWindow>
      </Frame>
    </Stage>
  );
}
